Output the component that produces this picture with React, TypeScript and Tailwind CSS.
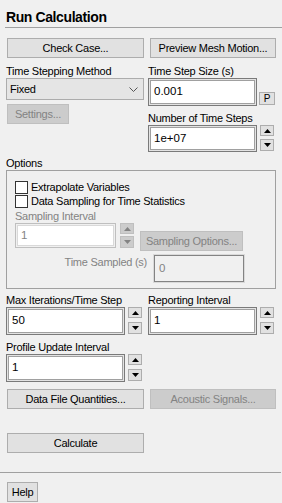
import React from "react";

const Tri = ({ up, color }: { up: boolean; color: string }) => (
  <svg width="7" height="4" viewBox="0 0 7 4">
    {up ? <polygon points="0,4 7,4 3.5,0" fill={color} /> : <polygon points="0,0 7,0 3.5,4" fill={color} />}
  </svg>
);

const Spinner = ({ disabled = false, h = 27 }: { disabled?: boolean; h?: number }) => {
  const cls = disabled
    ? "bg-[#cccccc] border border-[#bfbfbf]"
    : "bg-[#e1e1e1] border border-[#adadad]";
  const c = disabled ? "#838383" : "#000000";
  return (
    <div className="flex flex-col justify-between w-[14px]" style={{ height: h }}>
      <div className={`h-[11px] flex items-center justify-center ${cls}`}>
        <Tri up color={c} />
      </div>
      <div className={`h-[12px] flex items-center justify-center ${cls}`}>
        <Tri up={false} color={c} />
      </div>
    </div>
  );
};

const Btn = ({ children, w, disabled = false }: { children: React.ReactNode; w: number; disabled?: boolean }) => (
  <div
    className={`h-[20px] flex items-center justify-center whitespace-nowrap leading-none ${
      disabled ? "bg-[#cccccc] border border-[#bfbfbf] text-[#838383]" : "bg-[#e1e1e1] border border-[#adadad] text-black"
    }`}
    style={{ width: w }}
  >
    {children}
  </div>
);

const Input = ({ value, w, h }: { value: string; w: number; h: number }) => (
  <div
    className="bg-white border border-[#7a7a7a] shadow-[inset_0_0_0_1px_#e3e3e3,inset_0_0_0_2px_#a0a0a0] pl-[5px] pt-[5px] text-[11.5px] leading-[14px] tracking-normal text-black"
    style={{ width: w, height: h }}
  >
    {value}
  </div>
);

export default function App() {
  return (
    <div className="w-[282px] h-[503px] bg-[#f0f0f0] font-['Liberation_Sans',Arial,sans-serif] text-[11px] tracking-[-0.25px] text-black overflow-hidden whitespace-nowrap">
      {/* Title */}
      <div className="h-[27px] pl-[6px] pt-[9px] text-[14px] tracking-[-0.4px] font-bold leading-[16px]">Run Calculation</div>
      <div className="ml-[5px] h-px bg-[#a0a0a0]" />

      {/* Top buttons */}
      <div className="flex pl-[7px] mt-[10px]">
        <Btn w={137}>Check Case...</Btn>
        <div className="ml-[6px]">
          <Btn w={126}>Preview Mesh Motion...</Btn>
        </div>
      </div>

      {/* Two columns */}
      <div className="flex pl-[6px] mt-[6px]">
        <div className="w-[138px] flex flex-col">
          <div className="h-[14px] leading-[14px]">Time Stepping Method</div>
          <div className="h-[22px] bg-[#e5e5e5] border border-[#acacac] flex items-center justify-between pl-[3px] pr-[5px]">
            <span>Fixed</span>
            <svg width="9" height="5" viewBox="0 0 9 5">
              <polyline points="0.5,0.5 4.5,4.5 8.5,0.5" fill="none" stroke="#555" strokeWidth="1" />
            </svg>
          </div>
          <div className="mt-[4px] ml-px">
            <Btn w={62} disabled>
              Settings...
            </Btn>
          </div>
        </div>
        <div className="ml-[4px] flex flex-col">
          <div className="h-[14px] leading-[14px]">Time Step Size (s)</div>
          <div className="flex">
            <Input value="0.001" w={109} h={28} />
            <div className="ml-[2px] self-end mb-[1px] w-[16px] h-[13px] bg-[#e1e1e1] border border-[#adadad] flex items-center justify-center text-[10px] leading-none">
              P
            </div>
          </div>
          <div className="mt-[5px] h-[14px] leading-[14px]">Number of Time Steps</div>
          <div className="flex">
            <Input value="1e+07" w={109} h={27} />
            <div className="ml-[3px]">
              <Spinner h={26} />
            </div>
          </div>
        </div>
      </div>

      {/* Options */}
      <div className="pl-[6px] mt-[5px] h-[13px] leading-[13px]">Options</div>
      <div className="ml-[6px] w-[270px] h-[119px] border border-[#a0a0a0] pl-[8px] pt-[10px] flex flex-col">
        <div className="flex items-center h-[13px]">
          <div className="w-[13px] h-[13px] border border-[#333333] bg-white" />
          <span className="ml-[3px] leading-[13px]">Extrapolate Variables</span>
        </div>
        <div className="flex items-center h-[13px] mt-px">
          <div className="w-[13px] h-[13px] border border-[#333333] bg-white" />
          <span className="ml-[3px] leading-[13px]">Data Sampling for Time Statistics</span>
        </div>
        <div className="h-[14px] leading-[14px] mt-px text-[#838383]">Sampling Interval</div>
        <div className="flex">
          <div className="w-[101px] h-[25px] bg-white border border-[#bfbfbf] shadow-[inset_0_0_0_1px_#f0f0f0,inset_0_0_0_2px_#d9d9d9] pl-[5px] pt-[4px] text-[11.5px] tracking-normal leading-[14px] text-[#838383]">
            1
          </div>
          <div className="ml-[4px]">
            <Spinner disabled h={25} />
          </div>
          <div className="ml-[6px] mt-[8px]">
            <Btn w={103} disabled>
              Sampling Options...
            </Btn>
          </div>
        </div>
        <div className="flex mt-[3px]">
          <div className="w-[138px] text-right pr-[6px] pt-px leading-[14px] text-[#838383]">Time Sampled (s)</div>
          <div className="w-[92px] h-[29px] bg-[#f0f0f0] border border-[#d9d9d9] shadow-[inset_0_0_0_1px_#838383] pl-[5px] pt-[6px] text-[11.5px] tracking-normal leading-[14px] text-[#838383]">
            0
          </div>
        </div>
      </div>

      {/* Iterations */}
      <div className="flex pl-[6px] mt-[5px]">
        <div className="flex flex-col">
          <div className="h-[13px] leading-[13px]">Max Iterations/Time Step</div>
          <div className="flex">
            <Input value="50" w={119} h={28} />
            <div className="ml-[3px]">
              <Spinner h={27} />
            </div>
          </div>
        </div>
        <div className="ml-[6px] flex flex-col">
          <div className="h-[13px] leading-[13px]">Reporting Interval</div>
          <div className="flex">
            <Input value="1" w={109} h={28} />
            <div className="ml-[3px]">
              <Spinner h={27} />
            </div>
          </div>
        </div>
      </div>
      <div className="pl-[6px] mt-[6px] flex flex-col">
        <div className="h-[13px] leading-[13px]">Profile Update Interval</div>
        <div className="flex">
          <Input value="1" w={119} h={28} />
          <div className="ml-[3px]">
            <Spinner h={27} />
          </div>
        </div>
      </div>

      {/* Bottom buttons */}
      <div className="flex pl-[7px] mt-[7px]">
        <Btn w={137}>Data File Quantities...</Btn>
        <div className="ml-[6px]">
          <Btn w={126} disabled>
            Acoustic Signals...
          </Btn>
        </div>
      </div>
      <div className="pl-[7px] mt-[24px]">
        <Btn w={137}>Calculate</Btn>
      </div>
      <div className="mt-[19px] w-[281px] h-px bg-[#a0a0a0]" />
      <div className="pl-[7px] mt-[9px]">
        <Btn w={31}>Help</Btn>
      </div>
    </div>
  );
}
